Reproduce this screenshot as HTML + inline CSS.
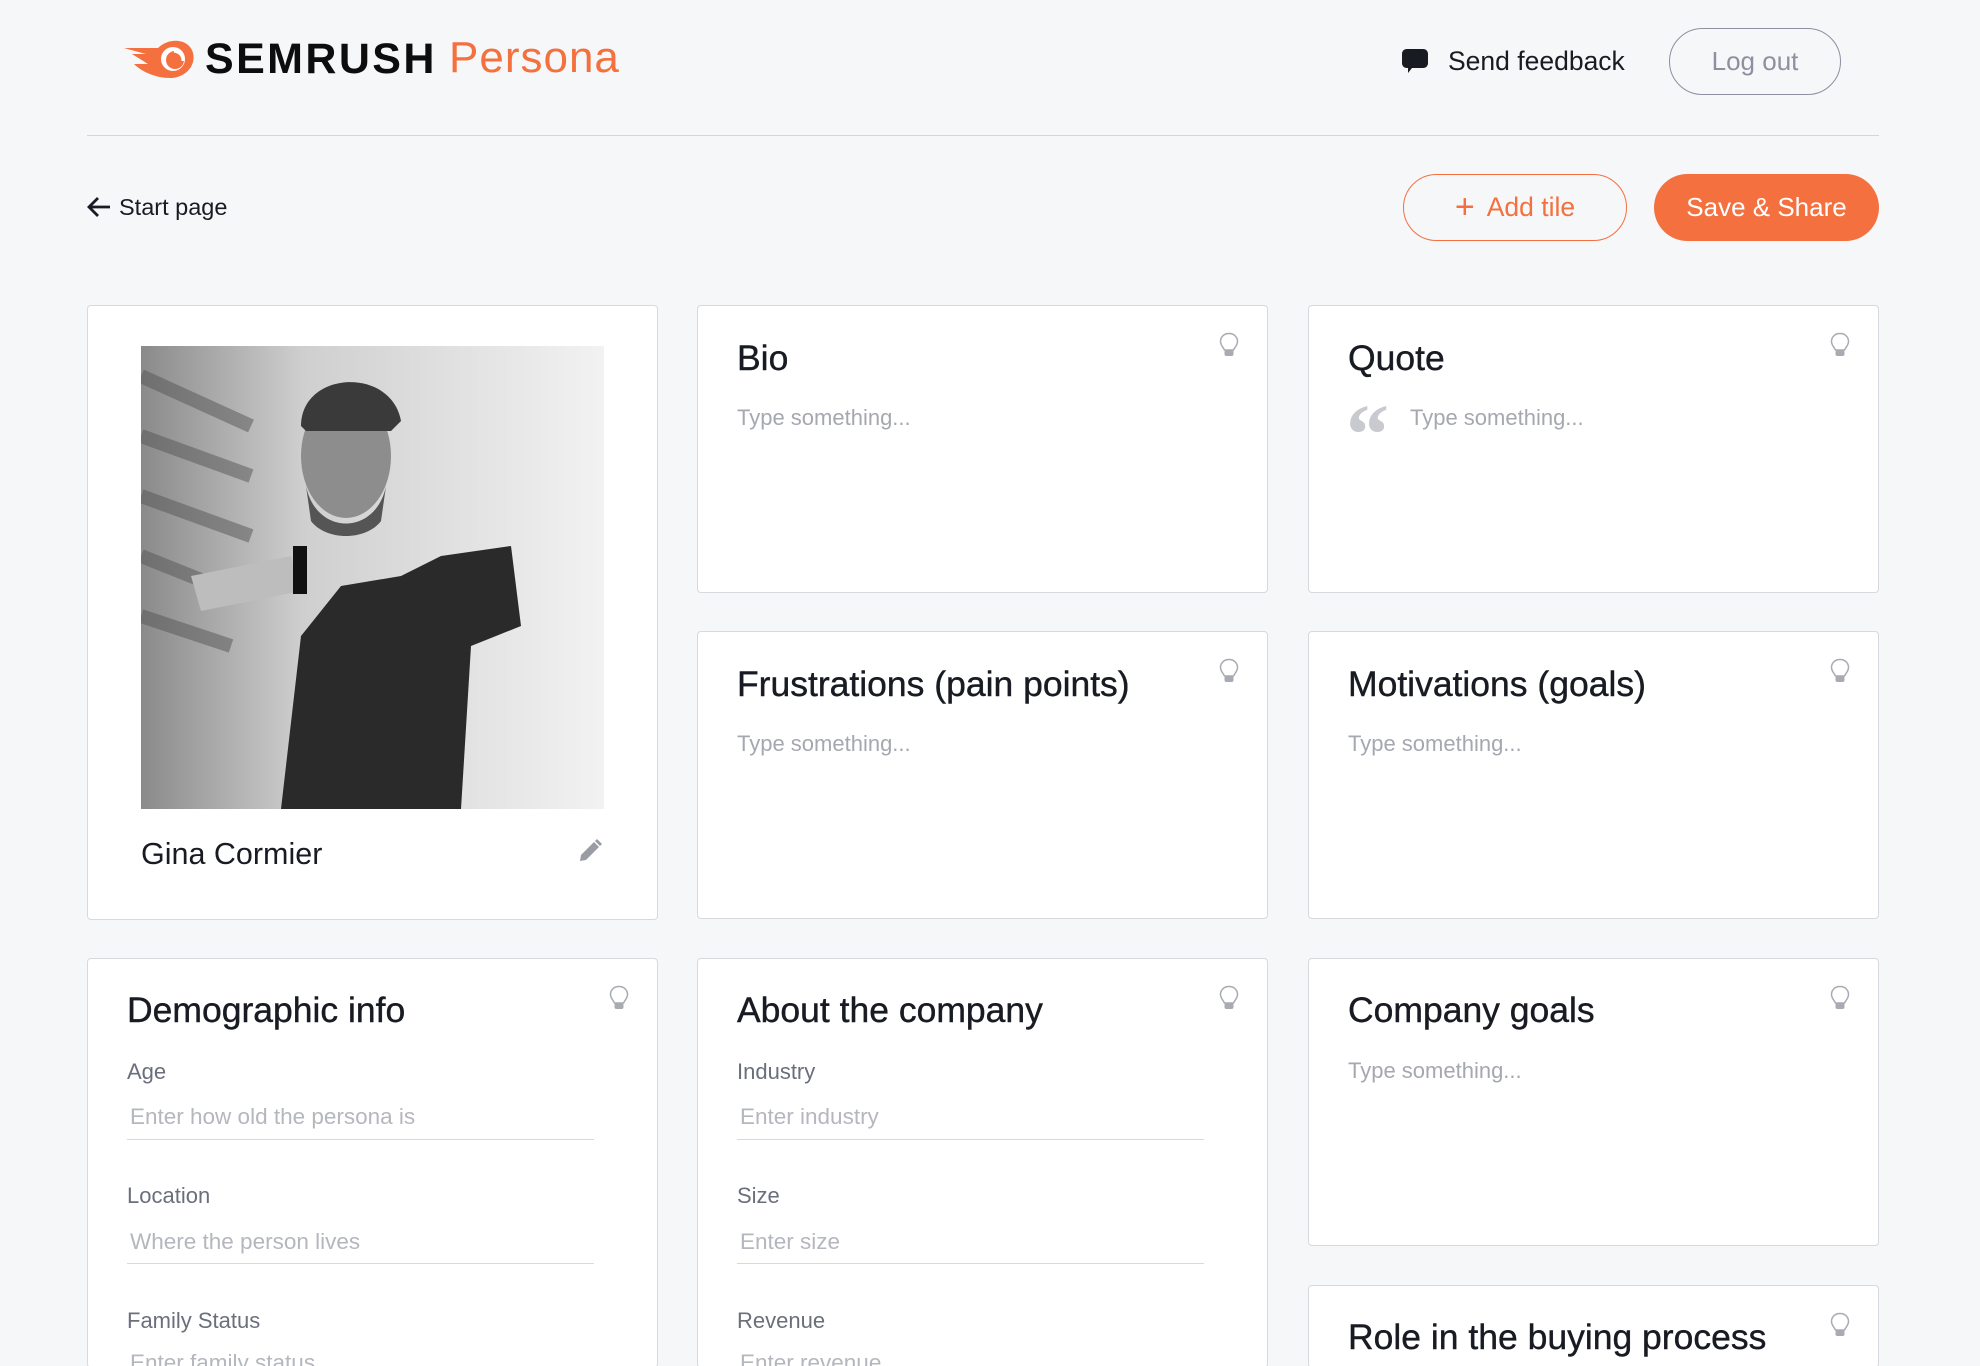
<!DOCTYPE html>
<html><head><meta charset="utf-8"><style>
*{box-sizing:border-box;margin:0;padding:0}
html,body{width:1980px;height:1366px;overflow:hidden}
body{background:#f6f7f9;font-family:"Liberation Sans",sans-serif;color:#191b23;position:relative}
#wrap{position:relative;width:1980px;height:1366px;overflow:hidden}
.a{position:absolute}
.card{position:absolute;background:#fff;border:1px solid #d7d9de;border-radius:4px;overflow:hidden}
.t{position:absolute;left:39px;font-size:35.5px;color:#191b23;line-height:1;-webkit-text-stroke:0.4px #191b23}
.ph{position:absolute;left:39px;font-size:22px;color:#a6a8b0;line-height:1}
.bulb{position:absolute;right:28px;top:26px}
.lbl{position:absolute;left:39px;font-size:22px;color:#6b6f7b;line-height:1}
.line{position:absolute;left:39px;width:467px;height:1px;background:#d7d9de}
.in{position:absolute;left:42px;font-size:22.5px;color:#b5b7be;line-height:1}
</style></head><body><div id="wrap">
<svg class="a" style="left:124px;top:38px" width="72" height="42" viewBox="0 0 72 42"><path d="M0 10 L34 10 C44 0 62 0 68 12 C74 26 62 40 46 40 C32 40 18 34 10 26 L24 26 L8 16 L22 16 Z" fill="#f4703f"/><circle cx="49" cy="21" r="12" fill="#fff"/><circle cx="51" cy="22" r="9" fill="#f4703f"/><path d="M50 13 C56 14 59 18 59 23" stroke="#fff" stroke-width="3" fill="none"/></svg>
<div class="a" style="left:205px;top:36px;font-size:43px;font-weight:700;letter-spacing:2.4px;color:#0d0d0d;line-height:46px">SEMRUSH</div>
<div class="a" style="left:449px;top:33px;font-size:44px;color:#f4703f;line-height:50px;letter-spacing:1px">Persona</div>
<svg class="a" style="left:1402px;top:48px" width="26" height="26" viewBox="0 0 26 26"><path d="M5 1 H21 C24 1 26 3 26 6 V15 C26 18 24 20 21 20 H10 L6 25 V20 H5 C2 20 0 18 0 15 V6 C0 3 2 1 5 1Z" fill="#191b23"/></svg>
<div class="a" style="left:1448px;top:46px;font-size:26.5px;line-height:30px">Send feedback</div>
<div class="a" style="left:1669px;top:28px;width:172px;height:67px;border:1.5px solid #8c90a0;border-radius:34px;font-size:26px;color:#8c90a0;text-align:center;line-height:64px">Log out</div>
<div class="a" style="left:87px;top:135px;width:1792px;height:1px;background:#d4d6db"></div>
<svg class="a" style="left:87px;top:196px" width="24" height="22" viewBox="0 0 24 22"><path d="M23 11 H3 M11 2 L2 11 L11 20" stroke="#191b23" stroke-width="2.8" fill="none"/></svg>
<div class="a" style="left:119px;top:193px;font-size:23.5px;line-height:28px">Start page</div>
<div class="a" style="left:1403px;top:174px;width:224px;height:67px;border:1.5px solid #f4703f;border-radius:34px;font-size:26.5px;color:#f4703f;text-align:center;line-height:64px"><span style="font-size:34px;vertical-align:-2px;margin-right:12px">+</span>Add tile</div>
<div class="a" style="left:1654px;top:174px;width:225px;height:67px;background:#f4703f;border-radius:34px;font-size:26px;color:#fff;text-align:center;line-height:67px">Save &amp; Share</div>

<div class="card" style="left:87px;top:305px;width:571px;height:615px">
<svg class="a" style="left:53px;top:40px" width="463" height="463" viewBox="0 0 463 463">
<defs><linearGradient id="bg" x1="0" x2="1"><stop offset="0" stop-color="#8a8a8a"/><stop offset="0.35" stop-color="#cfcfcf"/><stop offset="1" stop-color="#f2f2f2"/></linearGradient></defs>
<rect width="463" height="463" fill="url(#bg)"/>
<g stroke="#555" stroke-width="14" opacity="0.5"><path d="M0 30 L110 80 M0 90 L110 130 M0 150 L110 190 M0 210 L100 250 M0 270 L90 300"/></g>
<path d="M140 463 L160 290 L200 240 L260 230 L300 210 L370 200 L380 280 L330 300 L320 463 Z" fill="#2a2a2a"/>
<path d="M50 230 L150 210 L160 245 L60 265 Z" fill="#bdbdbd"/>
<ellipse cx="205" cy="110" rx="45" ry="62" fill="#8d8d8d"/>
<path d="M160 80 C160 25 250 20 260 75 L250 85 L165 85Z" fill="#3a3a3a"/>
<path d="M165 140 C175 190 235 190 245 140 L240 175 C225 195 185 195 170 175Z" fill="#555"/>
<rect x="152" y="200" width="14" height="48" fill="#111"/>
</svg>
<div class="a" style="left:53px;top:530px;font-size:30.5px;line-height:36px;color:#191b23">Gina Cormier</div>
<svg class="a" style="left:490px;top:533px" width="24" height="24" viewBox="0 0 24 24"><path d="M2 22 L3 16 L16 3 L21 8 L8 21 Z" fill="#9a9ca3"/><path d="M17 2 L19 0 L24 5 L22 7Z" fill="#9a9ca3"/></svg>
</div>

<div class="card" style="left:697px;top:305px;width:571px;height:288px"><div class="t" style="top:35px">Bio</div><div class="ph" style="top:101px">Type something...</div><svg class="bulb" width="20" height="26" viewBox="0 0 20 26"><path d="M10 1.5 C4.5 1.5 1.5 5.5 1.5 9.5 C1.5 13 4 15 5.5 18 L14.5 18 C16 15 18.5 13 18.5 9.5 C18.5 5.5 15.5 1.5 10 1.5Z" fill="none" stroke="#a8abb2" stroke-width="1.5"/><rect x="5.5" y="18" width="9" height="6" rx="2" fill="#a8abb2"/></svg></div>

<div class="card" style="left:1308px;top:305px;width:571px;height:288px"><div class="t" style="top:35px">Quote</div><div class="a" style="left:37px;top:88px;font-size:86px;font-weight:700;color:#c8cad0;font-family:'Liberation Serif',serif;line-height:80px">“</div><div class="ph" style="left:101px;top:101px">Type something...</div><svg class="bulb" width="20" height="26" viewBox="0 0 20 26"><path d="M10 1.5 C4.5 1.5 1.5 5.5 1.5 9.5 C1.5 13 4 15 5.5 18 L14.5 18 C16 15 18.5 13 18.5 9.5 C18.5 5.5 15.5 1.5 10 1.5Z" fill="none" stroke="#a8abb2" stroke-width="1.5"/><rect x="5.5" y="18" width="9" height="6" rx="2" fill="#a8abb2"/></svg></div>

<div class="card" style="left:697px;top:631px;width:571px;height:288px"><div class="t" style="top:35px">Frustrations (pain points)</div><div class="ph" style="top:101px">Type something...</div><svg class="bulb" width="20" height="26" viewBox="0 0 20 26"><path d="M10 1.5 C4.5 1.5 1.5 5.5 1.5 9.5 C1.5 13 4 15 5.5 18 L14.5 18 C16 15 18.5 13 18.5 9.5 C18.5 5.5 15.5 1.5 10 1.5Z" fill="none" stroke="#a8abb2" stroke-width="1.5"/><rect x="5.5" y="18" width="9" height="6" rx="2" fill="#a8abb2"/></svg></div>

<div class="card" style="left:1308px;top:631px;width:571px;height:288px"><div class="t" style="top:35px">Motivations (goals)</div><div class="ph" style="top:101px">Type something...</div><svg class="bulb" width="20" height="26" viewBox="0 0 20 26"><path d="M10 1.5 C4.5 1.5 1.5 5.5 1.5 9.5 C1.5 13 4 15 5.5 18 L14.5 18 C16 15 18.5 13 18.5 9.5 C18.5 5.5 15.5 1.5 10 1.5Z" fill="none" stroke="#a8abb2" stroke-width="1.5"/><rect x="5.5" y="18" width="9" height="6" rx="2" fill="#a8abb2"/></svg></div>

<div class="card" style="left:87px;top:958px;width:571px;height:410px"><div class="t" style="top:34px">Demographic info</div><svg class="bulb" width="20" height="26" viewBox="0 0 20 26"><path d="M10 1.5 C4.5 1.5 1.5 5.5 1.5 9.5 C1.5 13 4 15 5.5 18 L14.5 18 C16 15 18.5 13 18.5 9.5 C18.5 5.5 15.5 1.5 10 1.5Z" fill="none" stroke="#a8abb2" stroke-width="1.5"/><rect x="5.5" y="18" width="9" height="6" rx="2" fill="#a8abb2"/></svg>
<div class="lbl" style="top:102px">Age</div><div class="in" style="top:147px">Enter how old the persona is</div><div class="line" style="top:180px"></div>
<div class="lbl" style="top:226px">Location</div><div class="in" style="top:272px">Where the person lives</div><div class="line" style="top:304px"></div>
<div class="lbl" style="top:351px">Family Status</div><div class="in" style="top:393px">Enter family status</div></div>

<div class="card" style="left:697px;top:958px;width:571px;height:410px"><div class="t" style="top:34px">About the company</div><svg class="bulb" width="20" height="26" viewBox="0 0 20 26"><path d="M10 1.5 C4.5 1.5 1.5 5.5 1.5 9.5 C1.5 13 4 15 5.5 18 L14.5 18 C16 15 18.5 13 18.5 9.5 C18.5 5.5 15.5 1.5 10 1.5Z" fill="none" stroke="#a8abb2" stroke-width="1.5"/><rect x="5.5" y="18" width="9" height="6" rx="2" fill="#a8abb2"/></svg>
<div class="lbl" style="top:102px">Industry</div><div class="in" style="top:147px">Enter industry</div><div class="line" style="top:180px"></div>
<div class="lbl" style="top:226px">Size</div><div class="in" style="top:272px">Enter size</div><div class="line" style="top:304px"></div>
<div class="lbl" style="top:351px">Revenue</div><div class="in" style="top:393px">Enter revenue</div></div>

<div class="card" style="left:1308px;top:958px;width:571px;height:288px"><div class="t" style="top:34px">Company goals</div><div class="ph" style="top:101px">Type something...</div><svg class="bulb" width="20" height="26" viewBox="0 0 20 26"><path d="M10 1.5 C4.5 1.5 1.5 5.5 1.5 9.5 C1.5 13 4 15 5.5 18 L14.5 18 C16 15 18.5 13 18.5 9.5 C18.5 5.5 15.5 1.5 10 1.5Z" fill="none" stroke="#a8abb2" stroke-width="1.5"/><rect x="5.5" y="18" width="9" height="6" rx="2" fill="#a8abb2"/></svg></div>

<div class="card" style="left:1308px;top:1285px;width:571px;height:83px"><div class="t" style="top:34px">Role in the buying process</div><svg class="bulb" width="20" height="26" viewBox="0 0 20 26"><path d="M10 1.5 C4.5 1.5 1.5 5.5 1.5 9.5 C1.5 13 4 15 5.5 18 L14.5 18 C16 15 18.5 13 18.5 9.5 C18.5 5.5 15.5 1.5 10 1.5Z" fill="none" stroke="#a8abb2" stroke-width="1.5"/><rect x="5.5" y="18" width="9" height="6" rx="2" fill="#a8abb2"/></svg></div>
</div></body></html>
